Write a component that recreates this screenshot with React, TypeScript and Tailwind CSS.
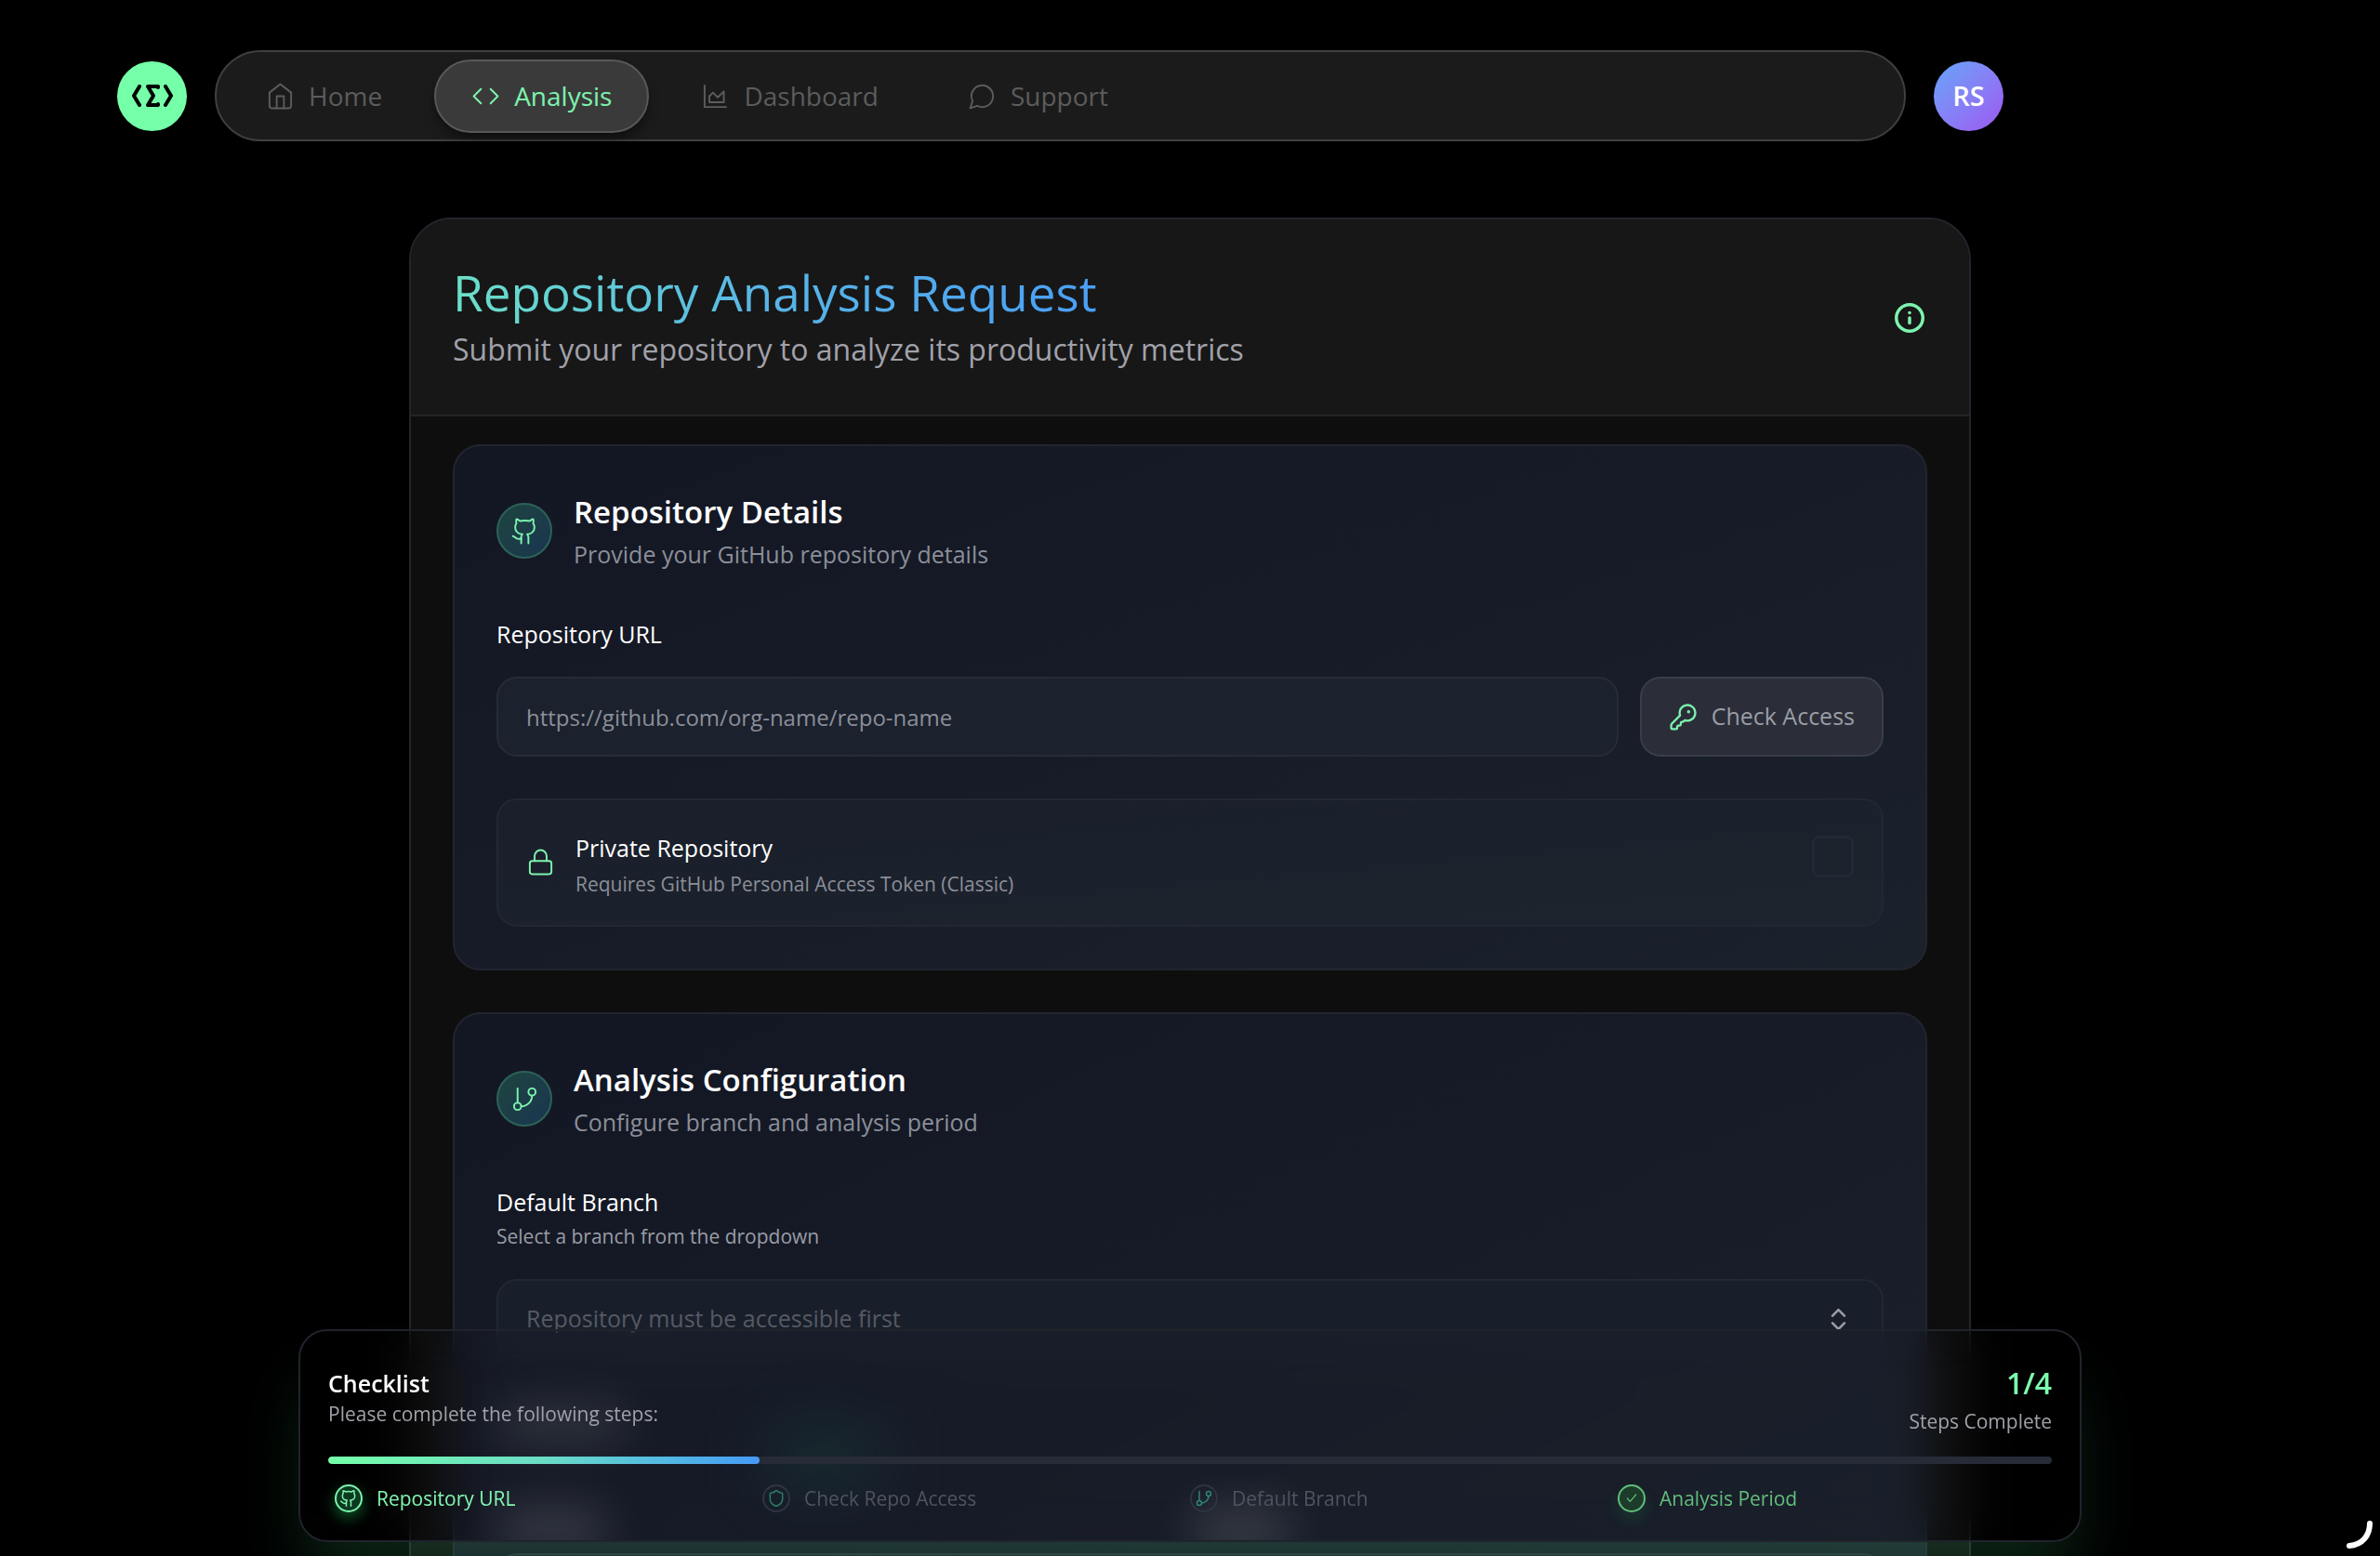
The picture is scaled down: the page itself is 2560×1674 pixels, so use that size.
import type { ReactNode } from 'react';

type GlyphProps = { className?: string; children: ReactNode; stroke?: number };

function Glyph({ className = 'size-[31px]', children, stroke = 1.5 }: GlyphProps) {
  return (
    <svg
      viewBox="0 0 24 24"
      fill="none"
      stroke="currentColor"
      strokeWidth={stroke}
      strokeLinecap="round"
      strokeLinejoin="round"
      className={`shrink-0 ${className}`}
      aria-hidden="true"
    >
      {children}
    </svg>
  );
}

const homeShape = (
  <>
    <path d="m3 9 9-7 9 7v11a2 2 0 0 1-2 2H5a2 2 0 0 1-2-2z" />
    <path d="M9 22V12h6v10" />
  </>
);
const codeShape = (
  <>
    <path d="m16 18 6-6-6-6" />
    <path d="m8 6-6 6 6 6" />
  </>
);
const chartShape = (
  <>
    <path d="M3 3v18h18" />
    <path d="M7 12v5h12V8l-5 5-4-4Z" />
  </>
);
const chatShape = <path d="M7.9 20A9 9 0 1 0 4 16.1L2 22Z" />;
const githubShape = (
  <>
    <path d="M15 22v-4a4.8 4.8 0 0 0-1-3.5c3 0 6-2 6-5.5.08-1.25-.27-2.48-1-3.5.28-1.15.28-2.35 0-3.5 0 0-1 0-3 1.5-2.64-.5-5.36-.5-8 0C6 2 5 2 5 2c-.3 1.15-.3 2.35 0 3.5A5.403 5.403 0 0 0 4 9c0 3.5 3 5.5 6 5.5-.39.49-.68 1.05-.85 1.65-.17.6-.22 1.23-.15 1.85v4" />
    <path d="M9 18c-4.51 2-5-2-7-2" />
  </>
);
const branchShape = (
  <>
    <path d="M6 3v12" />
    <circle cx="18" cy="6" r="3" />
    <circle cx="6" cy="18" r="3" />
    <path d="M18 9a9 9 0 0 1-9 9" />
  </>
);
const keyShape = (
  <>
    <path d="M2.586 17.414A2 2 0 0 0 2 18.828V21a1 1 0 0 0 1 1h3a1 1 0 0 0 1-1v-1a1 1 0 0 1 1-1h1a1 1 0 0 0 1-1v-1a1 1 0 0 1 1-1h.172a2 2 0 0 0 1.414-.586l.814-.814a6.5 6.5 0 1 0-4-4z" />
    <circle cx="16.5" cy="7.5" r=".5" fill="currentColor" />
  </>
);
const lockShape = (
  <>
    <rect width="18" height="11" x="3" y="11" rx="2" />
    <path d="M7 11V7a5 5 0 0 1 10 0v4" />
  </>
);
const chevronsShape = (
  <>
    <path d="m7 15 5 5 5-5" />
    <path d="m7 9 5-5 5 5" />
  </>
);
const shieldShape = (
  <path d="M20 13c0 5-3.5 7.5-7.66 8.95a1 1 0 0 1-.67-.01C7.5 20.5 4 18 4 13V6a1 1 0 0 1 1-1c2 0 4.5-1.2 6.24-2.72a1.17 1.17 0 0 1 1.52 0C14.51 3.81 17 5 19 5a1 1 0 0 1 1 1z" />
);
const checkShape = <path d="M19 6 9.5 17 5 12" />;

const navItems = [
  { label: 'Home', shape: homeShape, active: false },
  { label: 'Analysis', shape: codeShape, active: true },
  { label: 'Dashboard', shape: chartShape, active: false },
  { label: 'Support', shape: chatShape, active: false },
];

function TopBar() {
  return (
    <header className="mr-[405px] ml-[126px] flex items-center gap-[30px] pt-[54px]">
      <a href="#" aria-label="Start page" className="flex size-[75px] shrink-0 items-center justify-center rounded-full bg-[#75ffa8]">
        <svg viewBox="0 0 44 24" fill="none" stroke="#000" strokeWidth="4" strokeLinecap="round" strokeLinejoin="round" className="h-[24px] w-[44px]" aria-hidden="true">
          <path d="M8 2 2 12l6 10" />
          <path d="M28 3V2H17l6 10-6 10h11v-1" />
          <path d="m36 2 6 10-6 10" />
        </svg>
      </a>
      <nav className="flex h-[98px] flex-1 items-center gap-4 rounded-full border-2 border-[#3f3f3f] bg-[#1b1b1b] px-[13px]">
        {navItems.map((item) => (
          <a
            key={item.label}
            href="#"
            aria-current={item.active ? 'page' : undefined}
            className={
              item.active
                ? 'flex h-[79px] items-center gap-[15px] rounded-full border-2 border-[#585858] bg-[#3a3a3a] px-[38px] text-[28px] text-[#7df3ae] shadow-lg shadow-black/40'
                : 'flex h-[79px] items-center gap-[15px] px-[40px] text-[28px] text-[#5c5c5c]'
            }
          >
            <Glyph>{item.shape}</Glyph>
            {item.label}
          </a>
        ))}
      </nav>
      <button type="button" className="size-[75px] shrink-0 rounded-full bg-linear-to-br from-[#60a5fa] to-[#9a55f0] text-[29px] font-semibold text-white">
        RS
      </button>
    </header>
  );
}

function SectionHead({ title, text, shape }: { title: string; text: string; shape: ReactNode }) {
  return (
    <div className="flex items-center gap-[23px]">
      <span className="flex size-[60px] shrink-0 items-center justify-center rounded-full border-2 border-[#2d6257] bg-linear-to-br from-[#1f443f] to-[#1a3550] text-[#7df3ae]">
        <Glyph>{shape}</Glyph>
      </span>
      <div>
        <h2 className="text-[33px] leading-[51px] font-semibold text-white">{title}</h2>
        <p className="text-[25px] leading-[41px] text-[#8b8f99]">{text}</p>
      </div>
    </div>
  );
}

const cardClass = 'rounded-[30px] border-2 border-[#22252f] bg-linear-to-br from-[#131724] via-[#171b27] to-[#1b222c] p-[45px]';

function RepositoryCard() {
  return (
    <section className={cardClass}>
      <SectionHead title="Repository Details" text="Provide your GitHub repository details" shape={githubShape} />
      <label htmlFor="repo-url" className="mt-[47px] block text-[25px] leading-[36px] text-white">
        Repository URL
      </label>
      <div className="mt-7 flex gap-[23px]">
        <input
          id="repo-url"
          type="text"
          placeholder="https://github.com/org-name/repo-name"
          className="h-[86px] min-w-0 flex-1 rounded-[22px] border-2 border-[#262c37] bg-[#1b212d] px-[30px] text-[24px] text-white placeholder:text-[#8b8f99]"
        />
        <button type="button" className="flex h-[86px] items-center gap-[15px] rounded-[22px] border-2 border-[#3a3e48] bg-[#2b2e38] px-[29px] text-[25px] text-[#9a9da6]">
          <Glyph className="size-[31px] text-[#7df3ae]" stroke={1.8}>{keyShape}</Glyph>
          Check Access
        </button>
      </div>
      <div className="mt-[45px] flex items-start rounded-[22px] border-2 border-[#222833] bg-linear-to-br from-[#1a1f2b] to-[#1c242d] px-[30px] pt-[29px] pb-[27px]">
        <Glyph className="mt-[22px] size-[31px] text-[#7df3ae]">{lockShape}</Glyph>
        <label htmlFor="private-repo" className="ml-[22px] flex-1">
          <span className="block text-[25px] leading-[45px] text-white">Private Repository</span>
          <span className="block text-[21px] leading-[33px] text-[#8b8f99]">Requires GitHub Personal Access Token (Classic)</span>
        </label>
        <input id="private-repo" type="checkbox" className="mt-[9px] size-[45px] appearance-none rounded-lg border-[3px] border-[#222834]" />
      </div>
    </section>
  );
}

function ConfigurationCard() {
  return (
    <section className={`${cardClass} h-[760px]`}>
      <SectionHead title="Analysis Configuration" text="Configure branch and analysis period" shape={branchShape} />
      <label htmlFor="branch" className="mt-[47px] block text-[25px] leading-[36px] text-white">
        Default Branch
        <span className="block text-[21px] leading-[38px] text-[#9a9da6]">Select a branch from the dropdown</span>
      </label>
      <div className="relative mt-[27px]">
        <select
          id="branch"
          className="h-[86px] w-full appearance-none rounded-[22px] border-2 border-[#212733] bg-[#191f2a] px-[30px] text-[25px] text-[#555a64]"
        >
          <option>Repository must be accessible first</option>
        </select>
        <span className="pointer-events-none absolute inset-y-0 right-[33px] flex items-center text-[#9a9da6]">
          <Glyph stroke={2}>{chevronsShape}</Glyph>
        </span>
      </div>
      <div aria-hidden="true" className="mt-[209px] h-[86px] rounded-[22px] border-2 border-[#2a303b] bg-[#1b212d]" />
    </section>
  );
}

const steps = [
  { label: 'Repository URL', shape: githubShape, row: 'text-[#82f5b0]', ring: 'border-[#7df3ae] bg-[#0b3a20] shadow-[0_6px_16px_rgba(34,197,94,0.45)]', glyph: 'size-[20px]' },
  { label: 'Check Repo Access', shape: shieldShape, row: 'text-[#4f545f]', ring: 'border-[#303541]', glyph: 'size-[20px] text-[#2f7d69]' },
  { label: 'Default Branch', shape: branchShape, row: 'text-[#4f545f]', ring: 'border-[#2c3540]', glyph: 'size-[20px] text-[#2f8573]' },
  { label: 'Analysis Period', shape: checkShape, row: 'text-[#62bd7b]', ring: 'border-[#62bd7b] bg-[#1d3b2a] shadow-[0_8px_16px_rgba(34,197,94,0.15)]', glyph: 'size-[16px]' },
];

function Checklist() {
  return (
    <aside className="fixed inset-x-0 bottom-[15px] mx-auto w-3/4 max-w-[1918px] rounded-[31px] shadow-[0_50px_70px_-10px_rgba(74,222,128,0.16)]">
      <div className="relative overflow-hidden rounded-[31px] border-2 border-[#20232b] p-[30px] backdrop-blur-xl">
        <div aria-hidden="true" className="pointer-events-none absolute inset-0">
          <div className="absolute top-[80px] left-[11%] h-[40px] w-[140px] rounded-full bg-white/12 blur-xl" />
          <div className="absolute -bottom-[14px] left-[11%] h-[50px] w-[120px] rounded-full bg-white/14 blur-xl" />
          <div className="absolute -bottom-[14px] left-[50%] h-[50px] w-[110px] rounded-full bg-white/14 blur-xl" />
          <div className="absolute top-[110px] left-[26%] h-[50px] w-[130px] rounded-full bg-[#22c58a]/15 blur-2xl" />
        </div>
        <div className="relative flex items-center justify-between">
          <div>
            <h2 className="text-[25px] leading-[36px] font-semibold text-white">Checklist</h2>
            <p className="text-[21px] leading-[31px] text-[#a1a1aa]">Please complete the following steps:</p>
          </div>
          <div className="text-right">
            <p className="text-[32px] leading-[52px] font-semibold text-[#7dffae]">1/4</p>
            <p className="text-[21px] leading-[30px] text-[#a1a1aa]">Steps Complete</p>
          </div>
        </div>
        <div className="relative mt-[23px] h-2 overflow-hidden rounded-full bg-[#262b37]">
          <div className="h-full w-1/4 rounded-full bg-linear-to-r from-[#75ffa8] via-[#6bdcc6] to-[#479af5]" />
        </div>
        <ul className="relative mt-[22px] grid grid-cols-4 px-[7px]">
          {steps.map((step) => (
            <li key={step.label} className={`flex items-center gap-[15px] text-[21px] leading-[30px] ${step.row}`}>
              <span className={`flex size-[30px] items-center justify-center rounded-full border-2 ${step.ring}`}>
                <Glyph className={step.glyph} stroke={1.8}>{step.shape}</Glyph>
              </span>
              {step.label}
            </li>
          ))}
        </ul>
      </div>
    </aside>
  );
}

export default function App() {
  return (
    <div className="h-screen overflow-hidden bg-black font-['Open_Sans',sans-serif]">
      <TopBar />
      <main className="mx-auto mt-[82px] max-w-[1680px] overflow-hidden rounded-[46px] border-2 border-[#23252d] bg-[#0e0e0e]">
        <div className="flex items-center justify-between border-b-2 border-[#242424] bg-[#171717] px-[45px] pt-[45px] pb-[43px]">
          <div>
            <h1 className="w-fit bg-linear-to-r from-[#6be0c8] via-[#58b4e6] to-[#4a9ff5] bg-clip-text text-[53px] leading-[68px] text-transparent">
              Repository Analysis Request
            </h1>
            <p className="text-[32px] leading-[54px] text-[#a1a1aa]">Submit your repository to analyze its productivity metrics</p>
          </div>
          <button type="button" aria-label="About this form" className="text-[#7df3ae]">
            <Glyph className="size-[38px]" stroke={2.2}>
              <circle cx="12" cy="12" r="9" />
              <path d="M12 12v3.500" />
              <path d="M12 8.500h.01" />
            </Glyph>
          </button>
        </div>
        <div className="flex flex-col gap-[45px] px-[45px] pt-[30px]">
          <RepositoryCard />
          <ConfigurationCard />
        </div>
      </main>
      <Checklist />
      <svg viewBox="0 0 40 50" fill="none" stroke="#fff" strokeWidth="6" strokeLinecap="round" className="fixed right-0 bottom-0 h-[50px] w-[40px]" aria-hidden="true">
        <path d="M29 15c0 13-8 23-22 24" />
      </svg>
    </div>
  );
}
